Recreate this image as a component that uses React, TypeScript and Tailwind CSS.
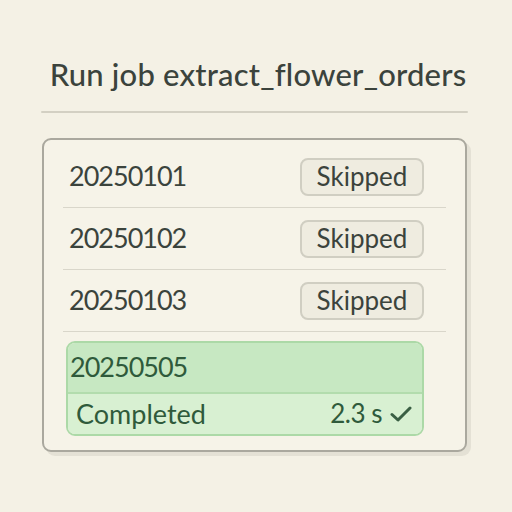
import React from "react";

const rows = ["20250101", "20250102", "20250103"];

export default function App() {
  return (
    <div
      className="w-[512px] h-[512px] bg-[#f4f1e5] flex flex-col pt-[55px] text-[#3b433c]"
      style={{ fontFamily: "Lato, 'Open Sans', sans-serif" }}
    >
      <h1 className="self-center text-[31px] leading-[38px] font-medium tracking-[0.2px] pl-[4px]">
        Run job extract_flower_orders
      </h1>
      <div className="mt-[18px] ml-[41px] w-[427px] h-[2px] bg-[#d3d0c3] rounded-full" />
      <div className="mt-[25px] ml-[42px] w-[425px] h-[314px] border-2 border-[#aaa89e] rounded-[9px] bg-[#f6f3e8] shadow-[4px_4px_0_#e4e1d5] pt-[6px] px-[19px] flex flex-col">
        {rows.map((r) => (
          <div
            key={r}
            className="h-[62px] border-b border-[#d9d6ca] flex items-center justify-between pl-[6px] pr-[22px]"
          >
            <span className="text-[27px] tracking-[-1px]">{r}</span>
            <span className="h-[38px] w-[124px] border-2 border-[#d0cec2] rounded-[8px] bg-[#efece0] flex items-center justify-center text-[26px] leading-none pb-[2px]">
              Skipped
            </span>
          </div>
        ))}
        <div className="mt-[9px] ml-[3px] mr-[22px] h-[95px] border-2 border-[#acd9a7] rounded-[9px] overflow-hidden flex flex-col text-[#2f5a3b]">
          <div className="h-[52px] bg-[#c7e8c2] border-b-2 border-[#b2dcad] flex items-center pl-[2px]">
            <span className="text-[27px] tracking-[-1px]">20250505</span>
          </div>
          <div className="flex-1 bg-[#d8f0d2] flex items-center justify-between pl-[8px] pr-[10px]">
            <span className="text-[27px]">Completed</span>
            <span className="flex items-center gap-[8px] text-[26px]">
              <span className="tracking-[-0.5px]">2.3 s</span>
              <svg width="22" height="18" viewBox="0 0 22 18" fill="none">
                <path
                  d="M2 9.5 L8 15 L20 3"
                  stroke="#3a5f44"
                  strokeWidth="3"
                  strokeLinecap="round"
                  strokeLinejoin="round"
                />
              </svg>
            </span>
          </div>
        </div>
      </div>
    </div>
  );
}
